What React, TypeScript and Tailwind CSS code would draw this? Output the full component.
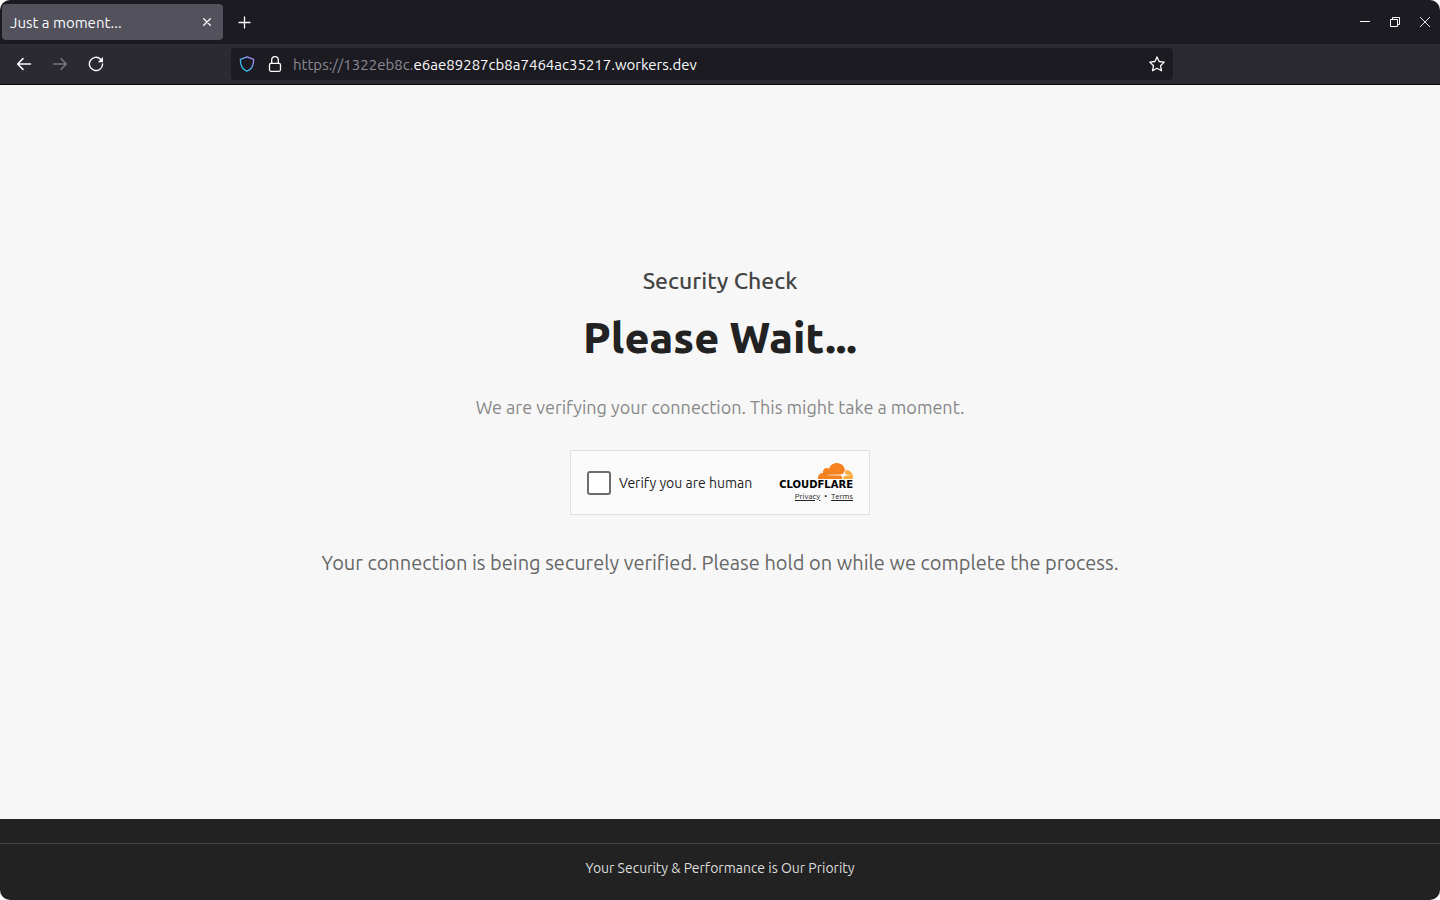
import React from "react";

function BackIcon() {
  return (
    <svg width="16" height="16" viewBox="0 0 16 16" fill="none" stroke="currentColor" strokeWidth="1.5" strokeLinecap="round" strokeLinejoin="round">
      <path d="M14.5 8H1.8M7 2.6 1.6 8 7 13.4" />
    </svg>
  );
}

function ForwardIcon() {
  return (
    <svg width="16" height="16" viewBox="0 0 16 16" fill="none" stroke="currentColor" strokeWidth="1.5" strokeLinecap="round" strokeLinejoin="round">
      <path d="M1.5 8h12.7M9 2.6 14.4 8 9 13.4" />
    </svg>
  );
}

function ReloadIcon() {
  return (
    <svg width="16" height="16" viewBox="0 0 16 16" fill="none" stroke="currentColor" strokeWidth="1.4" strokeLinecap="round">
      <path d="M12.6 3.2A6.6 6.6 0 1 0 14.6 8" />
      <path d="M15 1v5.2H9.8z" fill="currentColor" stroke="none" />
    </svg>
  );
}

function ShieldIcon() {
  return (
    <svg width="16" height="16" viewBox="0 0 16 16" fill="none">
      <defs>
        <linearGradient id="shield" x1="2" y1="14" x2="14" y2="2" gradientUnits="userSpaceOnUse">
          <stop offset="0.2" stopColor="#2bc4f0" />
          <stop offset="0.95" stopColor="#ab8df8" />
        </linearGradient>
      </defs>
      <path d="M8 .9 14 3.2c.5.2.8.5.7 1C14.5 9.3 12.5 13.5 8 15.2 3.5 13.5 1.5 9.3 1.3 4.2c0-.5.2-.8.7-1z" stroke="url(#shield)" strokeWidth="1.3" strokeLinejoin="round" />
    </svg>
  );
}

function LockIcon() {
  return (
    <svg width="16" height="16" viewBox="0 0 16 16" fill="none" stroke="currentColor" strokeWidth="1.3">
      <rect x="2.5" y="7.4" width="11" height="7.9" rx="1.5" />
      <path d="M4.7 7.4V4a3.3 3.3 0 0 1 6.6 0v3.4" />
    </svg>
  );
}

function StarIcon() {
  return (
    <svg width="16" height="16" viewBox="0 0 16 16" fill="none" stroke="currentColor" strokeWidth="1.3" strokeLinejoin="round">
      <path d="M8 .9 10.1 5.5 15.2 6.1 11.5 9.7 12.5 14.8 8 12.3 3.5 14.8 4.5 9.7.8 6.1 5.9 5.5z" />
    </svg>
  );
}

function CloudMark() {
  return (
    <svg width="35" height="16" viewBox="0 6.57 24 10.86" aria-hidden="true">
      <path fill="#f6821f" d="M16.5088 16.8447c.1475-.5068.0908-.9707-.1553-1.3154-.2246-.3164-.6045-.499-1.0615-.5205l-8.6592-.1123a.1559.1559 0 0 1-.1333-.0713c-.0283-.042-.0351-.0986-.021-.1553.0278-.084.1123-.1484.2036-.1562l8.7359-.1123c1.0351-.0489 2.1601-.8868 2.5537-1.9136l.499-1.3013c.0215-.0561.0293-.1128.0147-.168-.5625-2.5463-2.835-4.4453-5.5499-4.4453-2.5039 0-4.6284 1.6177-5.3876 3.8614-.4927-.3658-1.1187-.5625-1.794-.499-1.2026.119-2.1665 1.083-2.2861 2.2856-.0283.31-.0069.6128.0635.894C1.5683 13.171 0 14.7754 0 16.752c0 .1748.0142.3515.0352.5273.0141.083.0844.1475.1689.1475h15.9814c.0909 0 .1758-.0645.2032-.1553l.12-.4268z" />
      <path fill="#fbad41" d="M19.2656 11.2813c-.0771 0-.1611 0-.2383.0112-.0566 0-.1054.0415-.127.0976l-.3378 1.1744c-.1475.5068-.0918.9707.1543 1.3164.2256.3164.6055.498 1.0625.5195l1.8437.1133c.0557 0 .1055.0263.1329.0703.0283.043.0351.1074.0214.1562-.0283.084-.1132.1485-.204.1553l-1.921.1123c-1.041.0488-2.1582.8867-2.5527 1.914l-.1406.3585c-.0283.0713.0215.1416.0986.1416h6.5977c.0771 0 .1474-.0489.169-.126.1122-.4082.1757-.837.1757-1.2803 0-2.6025-2.125-4.727-4.7344-4.727" />
    </svg>
  );
}

function TabBar() {
  return (
    <div className="flex h-11 items-center bg-[#1c1b22] pl-0.5 text-[#fbfbfe]">
      <div className="flex h-9 w-[221px] items-center justify-between rounded bg-[#52515c] px-2 shadow-sm">
        <span className="pt-0.5 text-[15px] leading-6">Just a moment...</span>
        <button type="button" aria-label="Close tab" className="flex size-4 items-center justify-center">
          <svg width="8" height="8" viewBox="0 0 8 8" stroke="currentColor" strokeWidth="1.3" strokeLinecap="round">
            <path d="M.7.7l6.6 6.6M7.3.7.7 7.3" />
          </svg>
        </button>
      </div>
      <button type="button" aria-label="New tab" className="ml-[11px] flex size-5 items-center justify-center">
        <svg width="13" height="13" viewBox="0 0 13 13" stroke="currentColor" strokeWidth="1.3" strokeLinecap="round">
          <path d="M6.5 1v11M1 6.5h11" />
        </svg>
      </button>
      <div className="ml-auto flex gap-3.5 pr-[7px]">
        <button type="button" aria-label="Minimize" className="flex size-4 items-center justify-center">
          <svg width="10" height="10" viewBox="0 0 10 10" fill="none" stroke="currentColor">
            <path d="M0 4.5h10" />
          </svg>
        </button>
        <button type="button" aria-label="Restore" className="flex size-4 items-center justify-center">
          <svg width="10" height="10" viewBox="0 0 10 10" fill="none" stroke="currentColor">
            <path d="M.5 2.5h7v7h-7zM2.5 2.5v-2h7v7h-2" />
          </svg>
        </button>
        <button type="button" aria-label="Close window" className="flex size-4 items-center justify-center">
          <svg width="10" height="10" viewBox="0 0 10 10" fill="none" stroke="currentColor" strokeWidth="0.9">
            <path d="M0 0l10 10M10 0 0 10" />
          </svg>
        </button>
      </div>
    </div>
  );
}

function Toolbar() {
  return (
    <div className="flex items-center border-b border-[#0c0c0d] bg-[#2b2a33] py-1 text-[#fbfbfe]">
      <nav className="flex w-[231px] shrink-0 gap-5 pl-4">
        <button type="button" aria-label="Back"><BackIcon /></button>
        <button type="button" aria-label="Forward" className="text-[#75747b]" disabled><ForwardIcon /></button>
        <button type="button" aria-label="Reload"><ReloadIcon /></button>
      </nav>
      <div className="flex h-8 min-w-0 flex-1 items-center rounded bg-[#1c1b22] px-2">
        <button type="button" aria-label="Tracking protection"><ShieldIcon /></button>
        <button type="button" aria-label="Site information" className="ml-3"><LockIcon /></button>
        <span className="ml-2.5 flex-1 truncate pt-0.5 text-[15px] leading-6">
          <span className="text-[#8b8a92]">https://1322eb8c.</span>
          e6ae89287cb8a7464ac35217.workers.dev
        </span>
        <button type="button" aria-label="Bookmark this page"><StarIcon /></button>
      </div>
      <div className="w-[267px] shrink-0" />
    </div>
  );
}

function VerifyBox() {
  return (
    <div className="mt-[29px] flex w-[300px] items-center justify-between border border-[#e0e0e0] bg-[#fafafa] px-4 pt-3 pb-[11px]">
      <label className="flex items-center gap-2 text-sm text-[#232323]">
        <input type="checkbox" className="size-6 appearance-none rounded-[3px] border-2 border-[#6d6d6d] bg-white" />
        Verify you are human
      </label>
      <div className="flex flex-col items-end">
        <CloudMark />
        <span className="font-['DejaVu_Sans',sans-serif] text-[10px] leading-3 font-bold text-black">CLOUDFLARE</span>
        <div className="flex gap-1 text-[8px] leading-3 text-[#232323]">
          <a href="#privacy" className="underline">Privacy</a>
          <span>•</span>
          <a href="#terms" className="underline">Terms</a>
        </div>
      </div>
    </div>
  );
}

export default function App() {
  return (
    <div className="bg-white">
      <div className="flex min-h-screen flex-col overflow-hidden rounded-[10px] bg-[#f7f7f7] font-['Ubuntu','Noto_Sans',sans-serif]">
        <header>
          <TabBar />
          <Toolbar />
        </header>
        <main className="flex flex-1 flex-col items-center justify-center pb-[63px] text-center">
          <h2 className="text-[23px] leading-9 font-medium text-[#444444]">Security Check</h2>
          <h1 className="mt-2 text-[43px] leading-[60px] font-extrabold text-[#222222]">Please Wait...</h1>
          <p className="mt-[26px] text-lg text-[#888888]">We are verifying your connection. This might take a moment.</p>
          <VerifyBox />
          <p className="mt-8 text-xl leading-8 text-[#666666]">
            Your connection is being securely verified. Please hold on while we complete the process.
          </p>
        </main>
        <footer className="bg-[#222222] pt-6">
          <p className="border-t border-[#444444] pt-3.5 pb-[22px] text-center text-sm text-[#dddddd]">
            Your Security &amp; Performance is Our Priority
          </p>
        </footer>
      </div>
    </div>
  );
}
